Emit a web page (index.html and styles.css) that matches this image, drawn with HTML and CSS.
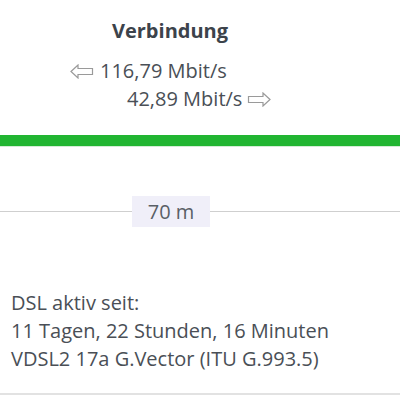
FILE: index.html
```html
<!DOCTYPE html>
<html lang="de">
<head>
    <meta charset="UTF-8">
    <title>Verbindung</title>
    <link rel="stylesheet" href="styles.css">
</head>
<body>
    <div class="connection">
        <h2 class="title">Verbindung</h2>
        <div class="speed speed-down">
            <svg class="arrow" width="24" height="15" viewBox="0 0 24 15"><path d="M1 7.5 L8 1 V4.5 H22.5 V10.5 H8 V14 Z" fill="none" stroke="#9a9a9a" stroke-width="1.2" stroke-linejoin="miter"/></svg>
            <span>116,79 Mbit/s</span>
        </div>
        <div class="speed speed-up">
            <span>42,89 Mbit/s</span>
            <svg class="arrow" width="24" height="15" viewBox="0 0 24 15"><path d="M23 7.5 L16 1 V4.5 H1.5 V10.5 H16 V14 Z" fill="none" stroke="#9a9a9a" stroke-width="1.2" stroke-linejoin="miter"/></svg>
        </div>
    </div>
    <div class="status-bar"></div>
    <div class="distance">
        <div class="line line-left"></div>
        <div class="distance-label">70 m</div>
        <div class="line"></div>
    </div>
    <div class="info">
        <div>DSL aktiv seit:</div>
        <div>11 Tagen, 22 Stunden, 16 Minuten</div>
        <div>VDSL2 17a G.Vector (ITU G.993.5)</div>
    </div>
</body>
</html>
```

FILE: styles.css
```css
body {
    margin: 0;
    font-family: "Open Sans", Lato, sans-serif;
    color: #4a4f56;
    background: #fff;
}
.connection {
    width: 340px;
    padding-top: 17px;
}
.title {
    margin: 0;
    text-align: center;
    font-size: 20px;
    font-weight: bold;
    color: #3c434b;
    line-height: 28px;
}
.speed {
    display: flex;
    align-items: center;
    gap: 6px;
    font-size: 20px;
    line-height: 28px;
}
.speed-down {
    margin-top: 12px;
    padding-left: 70px;
}
.speed-up {
    padding-left: 127px;
    gap: 5px;
}
.arrow {
    display: block;
}
.status-bar {
    margin-top: 22px;
    height: 11px;
    background: #21b531;
    border-bottom: 1px solid #d4ecd6;
}
.distance {
    display: flex;
    align-items: center;
    margin-top: 49px;
}
.line {
    flex: 1;
    height: 1px;
    background: #cfcfcf;
}
.line-left {
    flex: 0 0 132px;
}
.distance-label {
    width: 78px;
    height: 31px;
    line-height: 31px;
    text-align: center;
    background: #f0eff9;
    font-size: 20px;
    color: #5a5f66;
}
.info {
    margin-top: 62px;
    padding: 0 11px 20px;
    font-size: 20px;
    line-height: 28px;
    border-bottom: 2px solid #e2e2e2;
}
```
